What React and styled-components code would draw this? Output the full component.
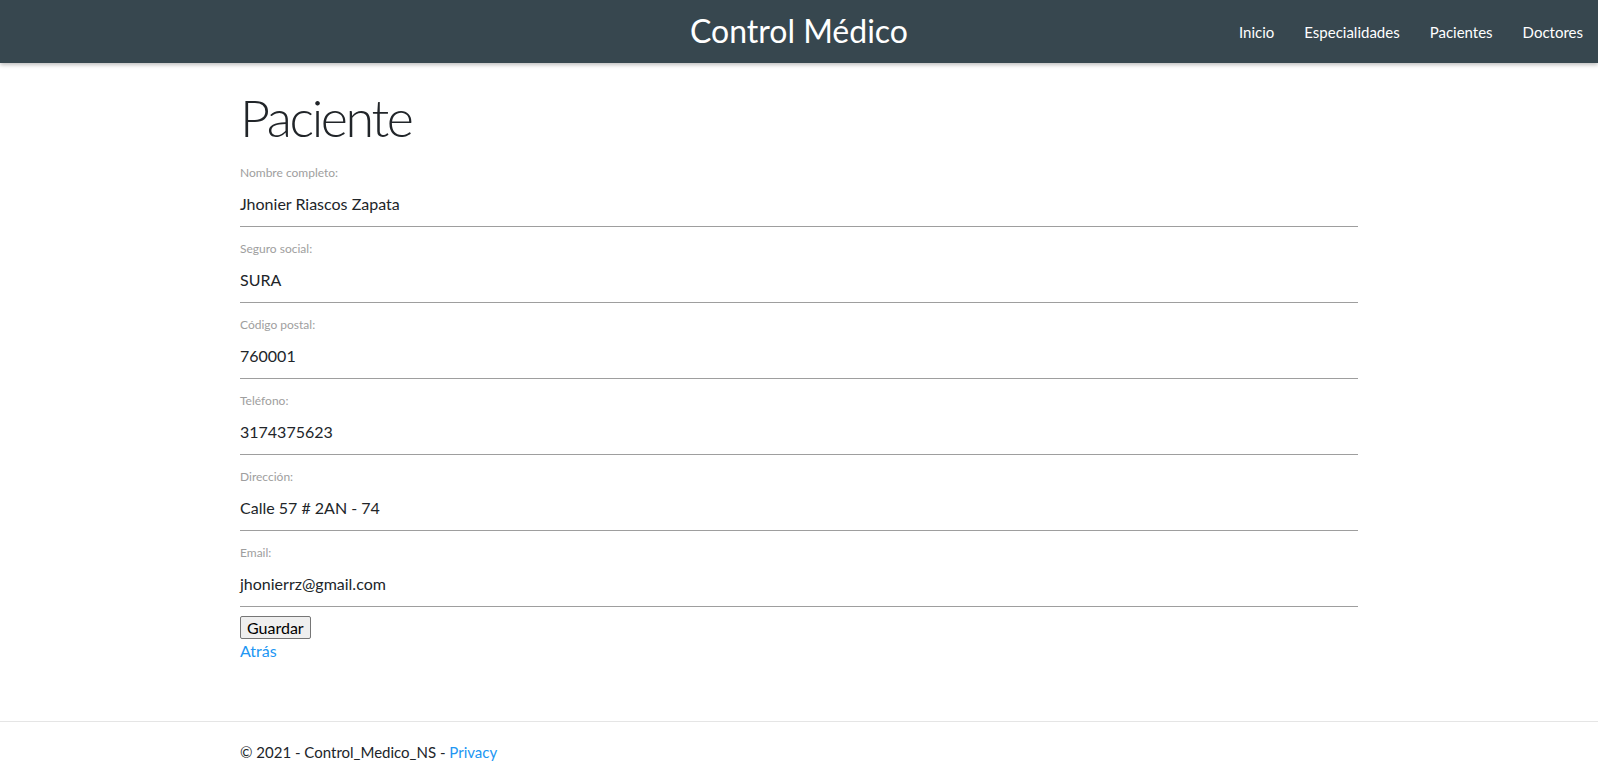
import React from "react";
import styled, { createGlobalStyle } from "styled-components";

const GlobalStyle = createGlobalStyle`
  html, body { margin: 0; padding: 0; }
  body {
    font-family: "Segoe UI", Lato, "Noto Sans", sans-serif;
    color: #212529;
    background: #ffffff;
  }
  * { box-sizing: border-box; }
`;

const Page = styled.div`
  min-height: 100vh;
  display: flex;
  flex-direction: column;
`;

const Header = styled.header`
  height: 63px;
  background: #37474f;
  box-shadow: 0 2px 4px rgba(0, 0, 0, 0.25);
  display: grid;
  grid-template-columns: 1fr auto 1fr;
  align-items: center;
  padding: 0 15px;
  position: relative;
  z-index: 1;
`;

const Brand = styled.div`
  grid-column: 2;
  color: #ffffff;
  font-size: 32px;
  line-height: 1;
  padding-bottom: 2px;
`;

const Nav = styled.nav`
  grid-column: 3;
  justify-self: end;
  display: flex;
  gap: 30px;
`;

const NavLink = styled.a`
  color: #ffffff;
  font-size: 15px;
  text-decoration: none;
  cursor: pointer;
`;

const Main = styled.main`
  flex: 1;
  width: 1118px;
  margin: 0 auto;
`;

const Title = styled.h1`
  font-size: 52px;
  font-weight: 300;
  letter-spacing: -2.4px;
  line-height: 1;
  margin: 0;
  padding-top: 28px;
  height: 88px;
`;

const Form = styled.form`
  display: flex;
  flex-direction: column;
  align-items: flex-start;
`;

const Field = styled.div`
  align-self: stretch;
  padding-top: 13px;
`;

const Label = styled.label`
  display: block;
  font-size: 12px;
  line-height: 18px;
  color: #9e9e9e;
`;

const Value = styled.div`
  font-size: 16px;
  line-height: 24px;
  padding: 10px 0 10px;
  border-bottom: 1px solid #9e9e9e;
`;

const Button = styled.button`
  margin-top: 9px;
  font-family: inherit;
  font-size: 16px;
  line-height: 19px;
  padding: 1px 6px;
  color: #000;
  background: #efefef;
  border: 1px solid #767676;
  border-radius: 2px;
`;

const Link = styled.a`
  color: #2196f3;
  font-size: inherit;
  line-height: 24px;
  text-decoration: none;
  cursor: pointer;
`;

const Footer = styled.footer`
  border-top: 1px solid #e5e5e5;
  line-height: 60px;
  font-size: 15px;
`;

const FooterInner = styled.div`
  width: 1118px;
  margin: 0 auto;
`;

const fields = [
  ["Nombre completo:", "Jhonier Riascos Zapata"],
  ["Seguro social:", "SURA"],
  ["Código postal:", "760001"],
  ["Teléfono:", "3174375623"],
  ["Dirección:", "Calle 57 # 2AN - 74"],
  ["Email:", "jhonierrz@gmail.com"],
];

export default function App() {
  return (
    <Page>
      <GlobalStyle />
      <Header>
        <Brand>Control Médico</Brand>
        <Nav>
          <NavLink>Inicio</NavLink>
          <NavLink>Especialidades</NavLink>
          <NavLink>Pacientes</NavLink>
          <NavLink>Doctores</NavLink>
        </Nav>
      </Header>
      <Main>
        <Title>Paciente</Title>
        <Form onSubmit={(e) => e.preventDefault()}>
          {fields.map(([label, value]) => (
            <Field key={label}>
              <Label>{label}</Label>
              <Value>{value}</Value>
            </Field>
          ))}
          <Button type="submit">Guardar</Button>
          <Link>Atrás</Link>
        </Form>
      </Main>
      <Footer>
        <FooterInner>
          © 2021 - Control_Medico_NS - <Link>Privacy</Link>
        </FooterInner>
      </Footer>
    </Page>
  );
}
